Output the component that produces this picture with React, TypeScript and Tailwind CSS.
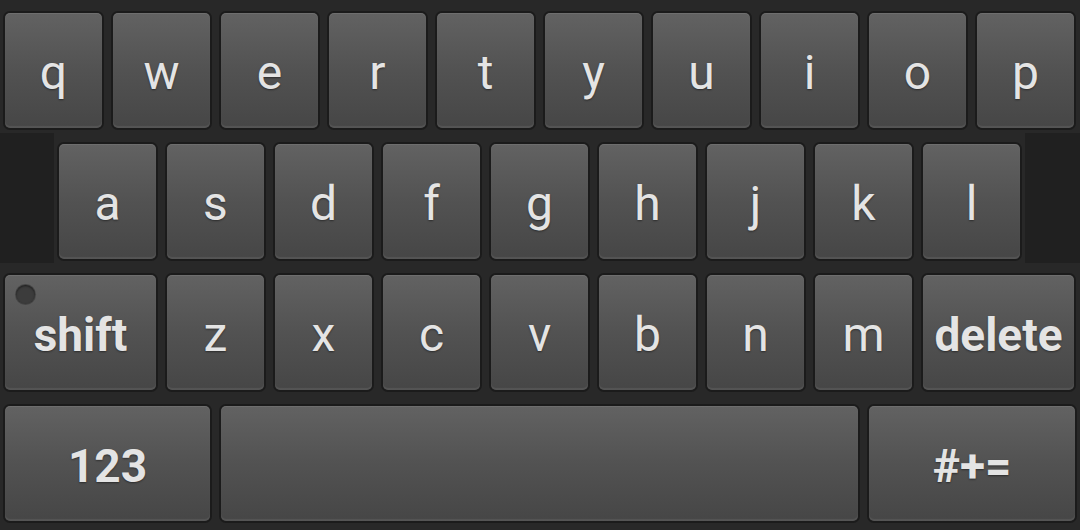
// keyboard
const row1 = ["q", "w", "e", "r", "t", "y", "u", "i", "o", "p"];
const row2 = ["a", "s", "d", "f", "g", "h", "j", "k", "l"];
const row3 = ["z", "x", "c", "v", "b", "n", "m"];

const keyBase =
  "relative h-[115px] flex items-center justify-center rounded-[5px] bg-gradient-to-b from-[#626262] via-[#525252] to-[#464646] text-[#e4e4e4] shadow-[0_0_0_2px_#1b1b1b,inset_0_-2px_1px_rgba(255,255,255,0.08),inset_0_1px_0_rgba(255,255,255,0.08)] [text-shadow:0_1px_2px_rgba(0,0,0,0.45)]";

const Key = ({ label, width = "w-[97px]", bold = false, children }: { label?: string; width?: string; bold?: boolean; children?: React.ReactNode }) => (
  <div className={`${keyBase} ${width} ${bold ? "text-[46px] font-bold" : "text-[48px] font-normal"}`}>
    {children}
    <span className="leading-none pt-[5px]">{label}</span>
  </div>
);

export default function App() {
  return (
    <div className="w-[1080px] h-[530px] bg-[#282828] overflow-hidden flex flex-col gap-[16px] pt-[13px] font-['Roboto',sans-serif] select-none">
      {/* top row */}
      <div className="flex gap-[11px] pl-[5px]">
        {row1.map((k) => (
          <Key key={k} label={k} />
        ))}
      </div>

      {/* home row */}
      <div className="flex items-start">
        <div className="w-[54px] h-[130px] bg-[#202020] -mt-[11px] -mb-[4px]" />
        <div className="flex gap-[11px] px-[5px]">
          {row2.map((k) => (
            <Key key={k} label={k} />
          ))}
        </div>
        <div className="flex-1 h-[130px] bg-[#202020] -mt-[11px] -mb-[4px]" />
      </div>

      {/* bottom letters */}
      <div className="flex gap-[11px] pl-[5px]">
        <Key label="shift" width="w-[151px]" bold>
          <div className="absolute left-[11px] top-[10px] w-[19px] h-[19px] rounded-full bg-[#3c3c3c] shadow-[inset_0_1px_2px_rgba(0,0,0,0.5),0_0_0_1px_#444]" />
        </Key>
        {row3.map((k) => (
          <Key key={k} label={k} />
        ))}
        <Key label="delete" width="w-[151px]" bold />
      </div>

      {/* space row */}
      <div className="flex gap-[11px] pl-[5px]">
        <Key label="123" width="w-[205px]" bold />
        <Key label="" width="w-[637px]" />
        <Key label="#+=" width="w-[206px]" bold />
      </div>
    </div>
  );
}
